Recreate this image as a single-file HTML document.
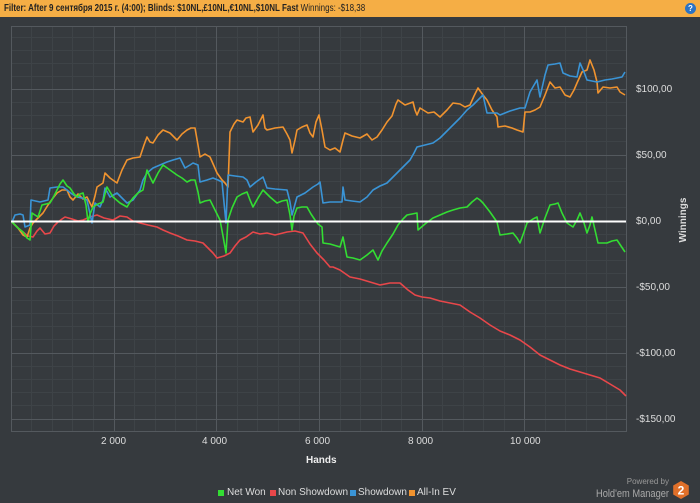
<!DOCTYPE html>
<html><head><meta charset="utf-8"><style>
body{margin:0;width:700px;height:503px;background:#363a3e;overflow:hidden;font-family:"Liberation Sans",sans-serif;position:relative}
.top{position:absolute;left:0;top:0;width:700px;height:17px;background:#f5ae45;font-size:10px;line-height:17px;color:#222}
.top span{position:absolute;left:4px;top:0;white-space:nowrap;transform-origin:0 50%;transform:scaleX(0.8)}
.help{position:absolute;right:4px;top:3px;width:11px;height:11px;border-radius:50%;background:#2b73c4;color:#fff;font-size:8px;line-height:11px;text-align:center;font-weight:bold}
svg{position:absolute;left:0;top:0}
.yl{position:absolute;left:636px;font-size:10px;color:#ddd}
.xl{position:absolute;top:436px;font-size:10px;color:#ddd}
.leg{position:absolute;top:487px;font-size:10px;color:#ddd}
.sq{position:absolute;top:490px;width:6px;height:6px}
</style></head><body>
<div class="top"><span><b>Filter: After 9 сентября 2015 г. (4:00); Blinds: $10NL,£10NL,€10NL,$10NL Fast</b> Winnings: -$18,38</span><div class="help">?</div></div>
<svg width="700" height="503">
<g stroke="#3e4347" stroke-width="1">
<path d="M31.5 26V431M52.5 26V431M72.5 26V431M93.5 26V431M134.5 26V431M155.5 26V431M175.5 26V431M196.5 26V431M237.5 26V431M257.5 26V431M278.5 26V431M299.5 26V431M340.5 26V431M360.5 26V431M381.5 26V431M401.5 26V431M442.5 26V431M463.5 26V431M483.5 26V431M504.5 26V431M545.5 26V431M565.5 26V431M586.5 26V431M606.5 26V431"/>
<path d="M11 37.5H626M11 50.5H626M11 63.5H626M11 76.5H626M11 102.5H626M11 115.5H626M11 128.5H626M11 141.5H626M11 168.5H626M11 181.5H626M11 194.5H626M11 207.5H626M11 234.5H626M11 247.5H626M11 260.5H626M11 273.5H626M11 300.5H626M11 313.5H626M11 326.5H626M11 339.5H626M11 366.5H626M11 379.5H626M11 392.5H626M11 405.5H626"/>
</g>
<g stroke="#54595e" stroke-width="1" fill="none">
<rect x="11.5" y="26.5" width="615" height="405"/>
<path d="M114.5 26V431M216.5 26V431M319.5 26V431M422.5 26V431M524.5 26V431M11 89.5H626M11 155.5H626M11 287.5H626M11 353.5H626M11 419.5H626"/>
</g>
<g fill="none" stroke-width="1.6" stroke-linejoin="round">
<polyline stroke="#e8474a" points="12,222 18,228 23,232 28,236 33,237 37,231 40,228 45,234 50,233 54,226 58,222 62,219 65,217 72,219 78,221 83,220 90,217 97,215 104,218 113,220 120,216 127,217 133,221 140,223 148,225 157,227 163,230 170,233 178,236 187,240 195,241 203,243 208,248 213,253 217,258 224,256 230,253 235,246 240,240 246,237 253,232 260,234 267,233 275,235 287,232 295,231 303,233 310,244 317,253 324,260 330,267 333,267 340,270 350,277 360,279 370,282 380,285 390,283 400,283 408,290 415,295 422,297 430,298 440,301 450,303 460,305 470,312 480,318 490,325 500,331 510,335 520,340 530,347 540,355 550,360 560,365 570,369 580,372 590,375 600,378 610,384 620,390 626,396"/>
<polyline stroke="#f0932f" points="12,222 18,228 23,235 27,237 30,228 33,223 38,218 43,213 48,205 53,198 57,193 62,190 67,190 70,197 73,200 78,194 83,199 87,197 92,207 95,196 97,187 103,183 105,173 110,178 117,183 122,170 127,160 133,158 140,157 144,145 147,137 150,142 153,143 158,135 163,130 170,133 177,140 182,134 187,130 191,128 195,128 198,145 200,157 205,154 210,157 214,166 217,173 222,180 225,183 228,187 230,132 234,124 237,120 243,122 246,118 250,117 253,132 258,125 263,115 265,128 267,130 275,128 283,127 287,134 290,140 292,153 295,140 297,130 302,127 307,125 310,133 313,137 316,122 319,115 322,130 325,147 330,150 335,148 340,152 343,140 345,133 352,136 360,138 367,134 372,140 377,137 382,130 387,122 392,116 396,104 398,100 405,105 413,102 415,110 417,115 420,108 428,113 434,112 440,117 447,110 453,103 460,104 465,107 470,105 474,96 478,88 483,95 487,100 492,110 497,117 498,127 505,126 512,128 517,130 523,132 525,112 530,112 535,110 540,107 545,95 550,82 555,88 560,87 565,95 570,97 574,90 577,83 582,72 587,70 590,60 594,70 597,82 598,93 603,87 610,88 617,87 620,92 625,95"/>
<polyline stroke="#3a94d6" points="12,222 15,215 20,214 23,215 25,227 30,225 31,200 40,202 48,200 50,188 57,187 63,187 67,190 72,194 77,197 82,198 87,200 92,223 95,203 100,207 103,200 105,188 110,197 117,193 122,198 127,203 133,200 140,190 143,180 147,173 153,168 160,165 167,162 173,160 180,158 185,168 190,165 193,163 198,165 200,182 207,180 213,178 218,180 222,182 226,223 228,175 235,176 243,177 247,180 250,187 256,182 263,177 267,188 275,189 287,190 290,202 292,215 297,197 305,193 313,187 318,184 320,182 323,203 330,202 342,202 343,187 345,200 352,201 360,202 367,197 373,190 380,186 387,183 392,178 397,173 403,167 410,160 414,153 417,147 425,145 433,143 440,138 446,132 453,125 460,118 467,110 473,105 478,100 483,95 487,113 492,113 497,113 500,115 510,111 520,108 525,108 530,92 537,80 540,97 545,75 548,65 555,64 560,63 563,73 570,76 577,77 580,63 584,72 587,80 592,81 597,82 605,80 612,79 617,78 622,77 625,72"/>
<polyline stroke="#33dd33" points="12,222 18,228 23,232 27,238 30,240 32,213 38,217 42,205 46,204 50,203 54,196 57,190 60,184 63,180 67,186 70,188 74,194 77,197 80,194 83,193 86,205 88,222 90,214 93,207 98,204 103,202 105,194 107,187 110,192 113,197 120,203 127,207 130,202 133,198 138,193 143,190 147,170 150,177 153,183 158,173 163,165 170,170 177,175 182,178 187,182 191,180 195,180 198,192 200,203 205,201 210,200 215,210 220,220 223,236 226,253 228,220 232,208 237,197 242,194 247,192 250,200 253,207 258,198 263,190 270,197 277,203 282,201 287,200 290,215 292,230 294,216 297,208 302,207 307,207 311,214 315,220 318,224 322,227 323,243 330,244 340,247 343,237 347,257 353,258 360,260 367,255 373,250 378,260 382,251 387,243 393,234 398,225 403,219 407,215 412,214 417,213 418,230 425,224 433,218 440,215 447,212 453,210 460,208 467,207 472,202 477,198 480,200 483,203 490,212 497,222 500,235 507,234 513,233 517,238 520,243 524,232 527,223 533,219 537,217 540,233 545,218 550,205 555,204 558,203 562,213 567,223 570,225 573,227 577,220 580,213 584,223 587,233 590,225 592,217 595,230 598,243 603,243 607,243 612,241 617,240 621,246 625,252"/>
</g>
<path d="M11 221.5H626" stroke="#ffffff" stroke-width="2"/>
<g transform="translate(681,490)"><polygon points="0,-9 7.8,-4.5 7.8,4.5 0,9 -7.8,4.5 -7.8,-4.5" fill="#e0702a"/><text x="0" y="4.5" font-size="12" font-weight="bold" fill="#fff" text-anchor="middle" font-family="Liberation Sans">2</text></g>
<text x="686" y="220" font-size="10" font-weight="bold" fill="#ddd" text-anchor="middle" transform="rotate(-90 686 220)" font-family="Liberation Sans">Winnings</text>
<text x="669" y="484" font-size="8" fill="#999" text-anchor="end" font-family="Liberation Sans">Powered by</text>
<text x="596" y="497" font-size="11" fill="#aaa" textLength="73" lengthAdjust="spacingAndGlyphs" font-family="Liberation Sans">Hold'em Manager</text>
</svg>
<div class="yl" style="top:84px">$100,00</div>
<div class="yl" style="top:150px">$50,00</div>
<div class="yl" style="top:216px">$0,00</div>
<div class="yl" style="top:282px">-$50,00</div>
<div class="yl" style="top:348px">-$100,00</div>
<div class="yl" style="top:414px">-$150,00</div>
<div class="xl" style="left:101px">2 000</div>
<div class="xl" style="left:202px">4 000</div>
<div class="xl" style="left:305px">6 000</div>
<div class="xl" style="left:408px">8 000</div>
<div class="xl" style="left:510px">10 000</div>
<div style="position:absolute;left:306px;top:455px;font-size:10px;font-weight:bold;color:#eee">Hands</div>
<div class="sq" style="left:218px;background:#33dd33"></div><div class="leg" style="left:227px">Net Won</div>
<div class="sq" style="left:270px;background:#e8474a"></div><div class="leg" style="left:278px">Non Showdown</div>
<div class="sq" style="left:350px;background:#3a94d6"></div><div class="leg" style="left:358px">Showdown</div>
<div class="sq" style="left:409px;background:#f0932f"></div><div class="leg" style="left:417px">All-In EV</div>
</body></html>
